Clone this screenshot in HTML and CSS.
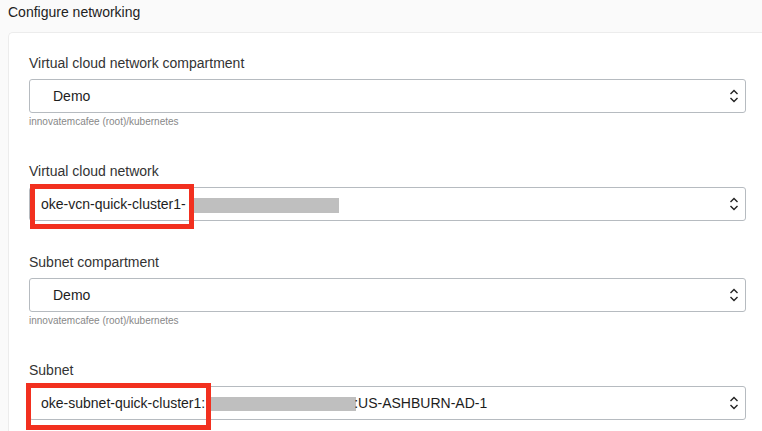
FILE: index.html
```html
<!DOCTYPE html>
<html>
<head>
<meta charset="utf-8">
<link rel="stylesheet" href="styles.css">
</head>
<body>
<div class="title">Configure networking</div>
<div class="card">
  <div class="field with-help">
    <div class="label">Virtual cloud network compartment</div>
    <div class="select">
      <span class="value indent">Demo</span>
      <svg class="chev" width="10" height="16" viewBox="0 0 10 16"><path d="M1.5 6 L5 2.5 L8.5 6 M1.5 10 L5 13.5 L8.5 10" fill="none" stroke="#222" stroke-width="1.4"/></svg>
    </div>
    <div class="help">innovatemcafee (root)/kubernetes</div>
  </div>
  <div class="field">
    <div class="label">Virtual cloud network</div>
    <div class="select">
      <span class="value">oke-vcn-quick-cluster1-<span class="redact vcn"></span></span>
      <svg class="chev" width="10" height="16" viewBox="0 0 10 16"><path d="M1.5 6 L5 2.5 L8.5 6 M1.5 10 L5 13.5 L8.5 10" fill="none" stroke="#222" stroke-width="1.4"/></svg>
      <div class="mark mark-vcn"></div>
    </div>
  </div>
  <div class="field with-help">
    <div class="label">Subnet compartment</div>
    <div class="select">
      <span class="value indent">Demo</span>
      <svg class="chev" width="10" height="16" viewBox="0 0 10 16"><path d="M1.5 6 L5 2.5 L8.5 6 M1.5 10 L5 13.5 L8.5 10" fill="none" stroke="#222" stroke-width="1.4"/></svg>
    </div>
    <div class="help">innovatemcafee (root)/kubernetes</div>
  </div>
  <div class="field last">
    <div class="label">Subnet</div>
    <div class="select">
      <span class="value">oke-subnet-quick-cluster1:<span class="redact sub"></span>:US-ASHBURN-AD-1</span>
      <svg class="chev" width="10" height="16" viewBox="0 0 10 16"><path d="M1.5 6 L5 2.5 L8.5 6 M1.5 10 L5 13.5 L8.5 10" fill="none" stroke="#222" stroke-width="1.4"/></svg>
      <div class="mark mark-sub"></div>
    </div>
  </div>
</div>
</body>
</html>
```
FILE: styles.css
```css
html, body {
  margin: 0;
  padding: 0;
  background: #fafafa;
  overflow: hidden;
  font-family: "Liberation Sans", Arial, sans-serif;
  color: #222;
}
body {
  height: 100vh;
  display: flex;
  flex-direction: column;
}
.title {
  padding: 4px 8px 0 8px;
  font-size: 14px;
  line-height: 17px;
  height: 28px;
  box-sizing: border-box;
  color: #222;
  flex: none;
}
.card {
  margin-left: 8px;
  flex: 1;
  min-height: 0;
  overflow: hidden;
  background: #fff;
  border: 1px solid #ececec;
  border-right: 0;
  border-bottom: 0;
  border-radius: 5px 0 0 0;
  padding: 21px 0 0 20px;
  box-sizing: border-box;
  margin-top: 4px;
}
.field {
  width: 717px;
  margin-bottom: 32px;
}
.field.with-help {
  margin-bottom: 34px;
}
.field.last {
  margin-bottom: 0;
}
.label {
  font-size: 14px;
  line-height: 18px;
  color: #333;
  margin-bottom: 7px;
}
.select {
  position: relative;
  height: 34px;
  box-sizing: border-box;
  border: 1px solid #b6bbc0;
  border-radius: 3px;
  display: flex;
  align-items: center;
  justify-content: space-between;
  padding: 0 6px 0 11px;
  background: #fff;
}
.value {
  font-size: 14px;
  color: #1d1d1d;
  white-space: nowrap;
  display: flex;
  align-items: center;
}
.value.indent {
  padding-left: 12px;
}
.chev {
  display: block;
}
.redact {
  display: inline-block;
  background: #bfbfbf;
}
.redact.vcn {
  width: 149px;
  height: 15px;
  margin-left: 4px;
  margin-top: 2px;
}
.redact.sub {
  width: 149px;
  height: 14px;
  margin-left: 2px;
  margin-right: -2px;
  margin-top: 1px;
}
.help {
  font-size: 10px;
  line-height: 13px;
  margin-top: 2px;
  color: #888;
}
.mark {
  position: absolute;
  border: 5px solid #f2301f;
  box-sizing: border-box;
}
.mark-vcn {
  left: 0;
  top: -4px;
  width: 164px;
  height: 45px;
}
.mark-sub {
  left: -4px;
  top: -4px;
  width: 185px;
  height: 47px;
}
```
